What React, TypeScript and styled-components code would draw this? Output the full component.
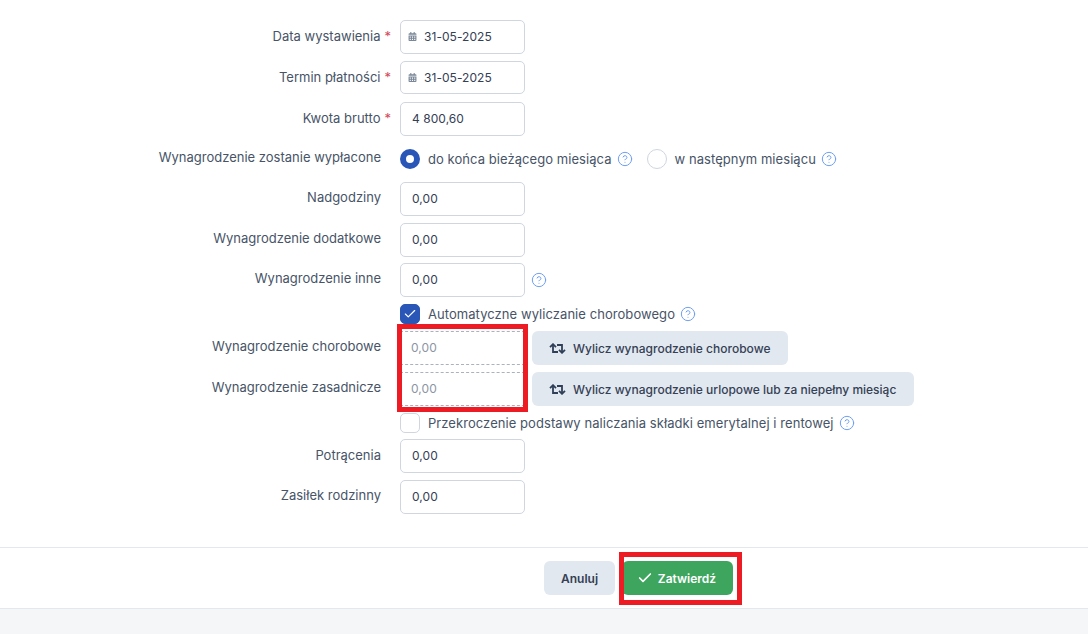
import { createGlobalStyle, styled } from "styled-components";
import { FaCalendarAlt } from "react-icons/fa";
import { LuCheck, LuCircleHelp } from "react-icons/lu";

const GlobalStyle = createGlobalStyle`
  html, body {
    margin: 0;
    padding: 0;
    height: 100%;
    overflow: hidden;
    background: #f5f6f8;
    font-family: "Inter", "Liberation Sans", sans-serif;
    font-size: 13px;
    color: #475467;
  }
`;

const Page = styled.div`
  height: 634px;
  display: flex;
  flex-direction: column;
`;

const Card = styled.div`
  background: #fff;
  height: 608px;
  display: flex;
  flex-direction: column;
  border-bottom: 1px solid #e4e7ec;
`;

const Form = styled.form`
  height: 547px;
  box-sizing: border-box;
  padding-top: 20px;
  display: flex;
  flex-direction: column;
`;

const Row = styled.div<{ $height?: number; $gap?: number }>`
  display: grid;
  grid-template-columns: 381px 1fr;
  column-gap: 19px;
  align-items: center;
  height: ${(p) => p.$height ?? 34}px;
  margin-bottom: ${(p) => p.$gap ?? 7}px;
`;

const Label = styled.label<{ $lift?: number }>`
  text-align: right;
  line-height: 20px;
  margin-top: ${(p) => -(p.$lift ?? 4)}px;
  white-space: nowrap;
`;

const Required = styled.span`
  color: #d0485a;
  margin-left: 4px;
  margin-right: -10px;
`;

const Controls = styled.div`
  display: flex;
  align-items: center;
  height: 100%;
`;

const Input = styled.div<{ $date?: boolean }>`
  box-sizing: border-box;
  width: 125px;
  height: 100%;
  border: 1px solid #cfd6e0;
  border-radius: 5px;
  padding: 0 11px 1px ${(p) => (p.$date ? 7 : 11)}px;
  display: flex;
  align-items: center;
  font-size: 12px;
  letter-spacing: 0.05px;
  color: #344054;
  background: #fff;
`;

const DateIcon = styled(FaCalendarAlt)`
  width: 9px;
  height: 9px;
  color: #7a8798;
  margin-right: 7px;
  flex: none;
`;

const Help = styled(LuCircleHelp)<{ $spaced?: boolean }>`
  width: 16px;
  height: 16px;
  color: #6f9ff0;
  stroke-width: 1.5;
  flex: none;
  margin-left: ${(p) => (p.$spaced ? 6 : 0)}px;
`;

const Radio = styled.span<{ $checked?: boolean }>`
  box-sizing: border-box;
  width: 20px;
  height: 20px;
  border-radius: 50%;
  flex: none;
  background: #fff;
  border: ${(p) => (p.$checked ? "6px solid #2a56b8" : "1px solid #cfd6e0")};
`;

const Choice = styled.span`
  margin-left: 8px;
  margin-right: 5px;
  letter-spacing: 0.06px;
  white-space: nowrap;
`;

const Gap = styled.span`
  width: 14px;
  flex: none;
`;

const Box = styled.span<{ $checked?: boolean }>`
  box-sizing: border-box;
  width: 20px;
  height: 20px;
  border-radius: 5px;
  flex: none;
  display: flex;
  align-items: center;
  justify-content: center;
  background: ${(p) => (p.$checked ? "#2a56b8" : "#fff")};
  border: 1px solid ${(p) => (p.$checked ? "#2a56b8" : "#cfd6e0")};
  color: #fff;
`;

const Block = styled.div`
  display: grid;
  grid-template-columns: 381px 144px 1fr;
  grid-template-rows: 34px 34px;
  row-gap: 7px;
  margin-bottom: 7px;
`;

const BlockLabel = styled(Label)`
  align-self: center;
  grid-column: 1;
`;

const Fields = styled.div`
  grid-column: 2;
  grid-row: 1 / span 2;
  margin-left: 19px;
  position: relative;
  display: flex;
  flex-direction: column;
  gap: 7px;

  &::after {
    content: "";
    position: absolute;
    left: -3px;
    right: -3px;
    top: -7px;
    bottom: -6px;
    border: 5px solid #ed1c24;
  }
`;

const ReadonlyField = styled.div`
  box-sizing: border-box;
  height: 34px;
  border: 1px dashed #aab2bf;
  border-width: 1px 0;
  padding: 0 11px 1px;
  display: flex;
  align-items: center;
  font-size: 12px;
  letter-spacing: 0.05px;
  color: #8c95a3;
`;

const Buttons = styled.div`
  grid-column: 3;
  grid-row: 1 / span 2;
  margin-left: 7px;
  display: flex;
  flex-direction: column;
  align-items: flex-start;
  gap: 7px;
`;

const CalcButton = styled.button`
  height: 34px;
  border: 0;
  border-radius: 6px;
  background: #e2e8f0;
  color: #344054;
  font: 500 12px "Inter", sans-serif;
  padding: 0 18px 0 17px;
  display: flex;
  align-items: center;
  gap: 7px;
  white-space: nowrap;
`;

const Footer = styled.div`
  flex: 1;
  border-top: 1px solid #e4e7ec;
  display: flex;
  align-items: center;
  padding-left: 544px;
  gap: 7px;
`;

const CancelButton = styled.button`
  width: 71px;
  height: 34px;
  border: 0;
  border-radius: 6px;
  background: #e2e8f0;
  color: #344054;
  font: 600 12px "Inter", sans-serif;
`;

const SubmitWrap = styled.div`
  position: relative;

  &::after {
    content: "";
    position: absolute;
    left: -3px;
    right: -9px;
    top: -9px;
    bottom: -10px;
    border: 5px solid #ed1c24;
  }
`;

const SubmitButton = styled.button`
  width: 111px;
  height: 34px;
  border: 0;
  border-radius: 6px;
  padding: 0 2px 0 0;
  background: #3ea55f;
  color: #fff;
  font: 600 12px "Inter", sans-serif;
  display: flex;
  align-items: center;
  justify-content: center;
  gap: 5px;
`;

const RepeatIcon = () => (
  <svg width="17" height="11" viewBox="0 0 17 11" fill="none" stroke="#2f3f58" strokeWidth="1.8">
    <path d="M4 1.5V9H9" />
    <path d="M1 4.2L4 1.2L7 4.2" />
    <path d="M13 9.5V2H8" />
    <path d="M10 6.8L13 9.8L16 6.8" />
  </svg>
);

const dateRow = (label: string, height?: number, gap?: number) => (
  <Row $height={height} $gap={gap}>
    <Label $lift={2}>
      {label}
      <Required>*</Required>
    </Label>
    <Controls>
      <Input $date>
        <DateIcon />
        31-05-2025
      </Input>
    </Controls>
  </Row>
);

const amountRow = (label: string, value: string, help?: boolean) => (
  <Row>
    <Label>{label}</Label>
    <Controls>
      <Input>{value}</Input>
      {help && <Help $spaced />}
    </Controls>
  </Row>
);

export default function App() {
  return (
    <Page>
      <GlobalStyle />
      <Card>
        <Form>
          {dateRow("Data wystawienia")}
          {dateRow("Termin płatności", 33, 8)}
          <Row>
            <Label $lift={2}>
              Kwota brutto
              <Required>*</Required>
            </Label>
            <Controls>
              <Input>4 800,60</Input>
            </Controls>
          </Row>
          <Row $height={32}>
            <Label>Wynagrodzenie zostanie wypłacone</Label>
            <Controls>
              <Radio $checked />
              <Choice>do końca bieżącego miesiąca</Choice>
              <Help />
              <Gap />
              <Radio />
              <Choice>w następnym miesiącu</Choice>
              <Help />
            </Controls>
          </Row>
          {amountRow("Nadgodziny", "0,00")}
          <Row $gap={6}>
            <Label>Wynagrodzenie dodatkowe</Label>
            <Controls>
              <Input>0,00</Input>
            </Controls>
          </Row>
          {amountRow("Wynagrodzenie inne", "0,00", true)}
          <Row $height={20}>
            <span />
            <Controls>
              <Box $checked>
                <LuCheck size={14} />
              </Box>
              <Choice>Automatyczne wyliczanie chorobowego</Choice>
              <Help />
            </Controls>
          </Row>
          <Block>
            <BlockLabel>Wynagrodzenie chorobowe</BlockLabel>
            <BlockLabel>Wynagrodzenie zasadnicze</BlockLabel>
            <Fields>
              <ReadonlyField>0,00</ReadonlyField>
              <ReadonlyField>0,00</ReadonlyField>
            </Fields>
            <Buttons>
              <CalcButton>
                <RepeatIcon />
                Wylicz wynagrodzenie chorobowe
              </CalcButton>
              <CalcButton>
                <RepeatIcon />
                Wylicz wynagrodzenie urlopowe lub za niepełny miesiąc
              </CalcButton>
            </Buttons>
          </Block>
          <Row $height={20} $gap={6}>
            <span />
            <Controls>
              <Box />
              <Choice>
                Przekroczenie podstawy naliczania składki emerytalnej i rentowej
              </Choice>
              <Help />
            </Controls>
          </Row>
          <Row>
            <Label $lift={2}>Potrącenia</Label>
            <Controls>
              <Input>0,00</Input>
            </Controls>
          </Row>
          {amountRow("Zasiłek rodzinny", "0,00")}
        </Form>
        <Footer>
          <CancelButton>Anuluj</CancelButton>
          <SubmitWrap>
            <SubmitButton>
              <LuCheck size={16} strokeWidth={2.5} />
              Zatwierdź
            </SubmitButton>
          </SubmitWrap>
        </Footer>
      </Card>
    </Page>
  );
}
